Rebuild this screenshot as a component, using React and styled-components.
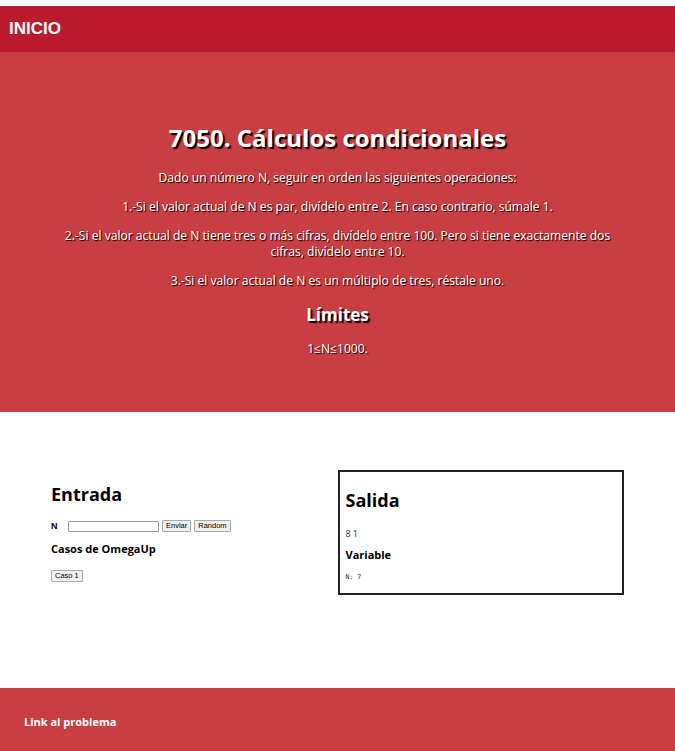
import styled, { createGlobalStyle } from "styled-components";

const GlobalStyle = createGlobalStyle`
  body {
    margin: 0;
    background: #fff;
    font-family: "Open Sans", "Noto Sans", sans-serif;
  }
`;

const Header = styled.header`
  margin-top: 6px;
  height: 46px;
  background-color: #b91a2e;
  display: flex;
  align-items: center;
  padding-left: 9px;
`;

const HomeLink = styled.a`
  color: #fff;
  font-family: "Liberation Sans", Arial, sans-serif;
  font-weight: 700;
  font-size: 17px;
  text-decoration: none;
`;

const Hero = styled.section`
  background-color: #c83e42;
  color: #fff;
  text-align: center;
  padding: 70px 55px 42px;
  text-shadow: 1px 1px 1px #000;
  h1 {
    margin: 0 0 16px;
    font-size: 24px;
    line-height: 32px;
    font-weight: 700;
    text-shadow: 2px 2px 1px #000;
  }
  h2 {
    margin: 13px 0 13px;
    font-size: 17px;
    line-height: 26px;
    font-weight: 700;
    text-shadow: 2px 2px 1px #000;
  }
  p {
    margin: 0 0 13px;
    font-size: 12.1px;
    line-height: 16px;
  }
`;

const Workspace = styled.section`
  display: grid;
  grid-template-columns: 1fr 1fr;
  padding: 58px 51px 93px;
  align-items: start;
`;

const Column = styled.div`
  padding-top: 11px;
`;

const Title = styled.h2`
  margin: 0 0 ${(p) => p.$gap || "13px"};
  font-size: 18px;
  line-height: 26px;
  font-weight: 700;
  color: #000;
`;

const SubTitle = styled.h3`
  margin: ${(p) => p.$margin || "0"};
  font-size: 11px;
  line-height: 16px;
  font-weight: 700;
  color: #000;
`;

const InputRow = styled.div`
  display: flex;
  align-items: center;
  gap: 3px;
  margin-bottom: 9px;
`;

const Label = styled.label`
  font-family: "Liberation Sans", Arial, sans-serif;
  font-weight: 700;
  font-size: 9px;
  width: 14px;
`;

const TextInput = styled.input`
  width: 87px;
  height: 7px;
  padding: 1px;
  border: 1px solid #999;
  border-radius: 1px;
  font-size: 8px;
`;

const Button = styled.button`
  font-family: "Liberation Sans", Arial, sans-serif;
  font-size: 7.5px;
  padding: 1px 3px;
  height: 12px;
  line-height: 8px;
  background: #efefef;
  border: 1px solid #aaa;
  border-radius: 1px;
  color: #000;
`;

const OutputBox = styled.div`
  border: 2px solid #222;
  padding: 15px 6px 12px;
`;

const Result = styled.div`
  font-size: 9px;
  letter-spacing: 2px;
  color: #333;
  margin-bottom: 7px;
`;

const VarLine = styled.pre`
  margin: 10px 0 0;
  font-family: "DejaVu Sans Mono", monospace;
  font-size: 6.5px;
  color: #222;
`;

const Footer = styled.footer`
  background-color: #c83e42;
  padding: 27px 24px 24px;
  a {
    display: block;
    color: #fff;
    font-weight: 700;
    font-size: 11px;
    line-height: 14px;
    text-decoration: none;
  }
`;

export default function App() {
  return (
    <>
      <GlobalStyle />
      <Header>
        <HomeLink href="#">INICIO</HomeLink>
      </Header>
      <Hero>
        <h1>7050. Cálculos condicionales</h1>
        <p>Dado un número N, seguir en orden las siguientes operaciones:</p>
        <p>1.-Si el valor actual de N es par, divídelo entre 2. En caso contrario, súmale 1.</p>
        <p>
          2.-Si el valor actual de N tiene tres o más cifras, divídelo entre 100. Pero si tiene
          exactamente dos cifras, divídelo entre 10.
        </p>
        <p>3.-Si el valor actual de N es un múltiplo de tres, réstale uno.</p>
        <h2>Límites</h2>
        <p>1≤N≤1000.</p>
      </Hero>
      <Workspace>
        <Column>
          <Title>Entrada</Title>
          <InputRow>
            <Label>N</Label>
            <TextInput type="text" />
            <Button>Enviar</Button>
            <Button>Random</Button>
          </InputRow>
          <SubTitle $margin="0 0 4px">Casos de OmegaUp</SubTitle>
          <Button>Caso 1</Button>
        </Column>
        <OutputBox>
          <Title $gap="14px">Salida</Title>
          <Result>81</Result>
          <SubTitle>Variable</SubTitle>
          <VarLine>N: 7</VarLine>
        </OutputBox>
      </Workspace>
      <Footer>
        <a href="#">Link al problema</a>
      </Footer>
    </>
  );
}
